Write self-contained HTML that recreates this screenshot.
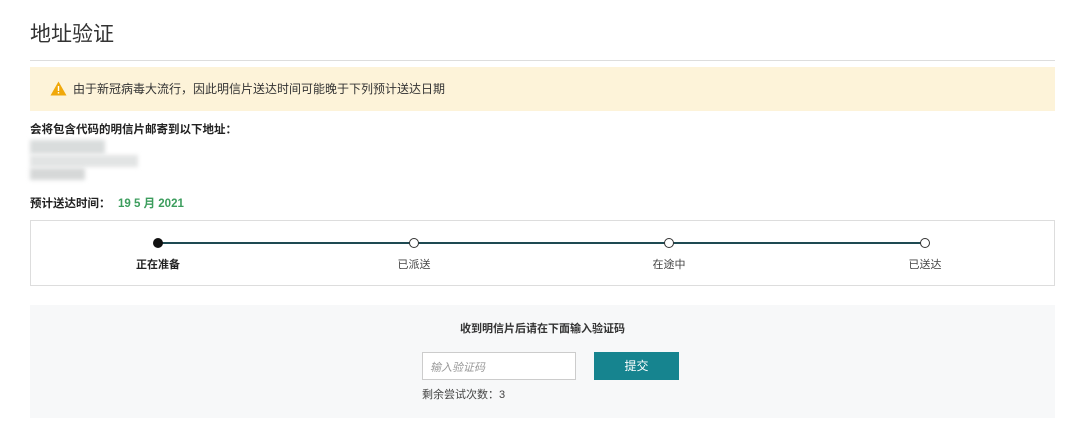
<!DOCTYPE html>
<html><head><meta charset="utf-8"><style>
body{margin:0;background:#fff;font-family:"Liberation Sans","Noto Sans CJK SC",sans-serif;color:#222;width:1080px;height:447px;overflow:hidden;position:relative}
.a{position:absolute}
</style></head><body>
<div class="a" style="left:30px;top:18px;font-size:21px;color:#333;">地址验证</div>
<div class="a" style="left:30px;top:60px;width:1025px;height:1px;background:#ddd"></div>
<div class="a" style="left:30px;top:67px;width:1025px;height:44px;background:#fdf3d9"></div>
<svg class="a" style="left:50px;top:81px" width="17" height="15" viewBox="0 0 17 15"><path d="M8.5 0.5L16.5 14.5H0.5Z" fill="#f0a80a"/><rect x="7.8" y="5" width="1.4" height="5" fill="#fff"/><rect x="7.8" y="11" width="1.4" height="1.5" fill="#fff"/></svg>
<div class="a" style="left:73px;top:80px;font-size:12px;color:#333">由于新冠病毒大流行，因此明信片送达时间可能晚于下列预计送达日期</div>
<div class="a" style="left:30px;top:121px;font-size:11.5px;font-weight:bold;color:#222">会将包含代码的明信片邮寄到以下地址：</div>
<div class="a" style="left:30px;top:140px;width:75px;height:14px;background:#d9dcdc;filter:blur(2px)"></div>
<div class="a" style="left:30px;top:155px;width:108px;height:12px;background:#e2e4e4;filter:blur(2px)"></div>
<div class="a" style="left:30px;top:168px;width:55px;height:12px;background:#d6d8d8;filter:blur(2px)"></div>
<div class="a" style="left:30px;top:195px;font-size:11.5px;font-weight:bold;color:#222">预计送达时间：</div>
<div class="a" style="left:118px;top:195px;font-size:11.5px;font-weight:bold;color:#3c9d5d">19 5 月 2021</div>
<div class="a" style="left:30px;top:220px;width:1023px;height:64px;border:1px solid #ddd"></div>
<div class="a" style="left:158px;top:242px;width:767px;height:2px;background:#1e4a52"></div>
<div class="a" style="left:153px;top:238px;width:10px;height:10px;border-radius:50%;background:#111"></div>
<div class="a" style="left:409px;top:238px;width:8px;height:8px;border-radius:50%;background:#fff;border:1px solid #333"></div>
<div class="a" style="left:664px;top:238px;width:8px;height:8px;border-radius:50%;background:#fff;border:1px solid #333"></div>
<div class="a" style="left:920px;top:238px;width:8px;height:8px;border-radius:50%;background:#fff;border:1px solid #333"></div>
<div class="a" style="left:118px;top:256px;width:80px;text-align:center;font-size:11px;font-weight:bold">正在准备</div>
<div class="a" style="left:374px;top:256px;width:80px;text-align:center;font-size:11px;color:#444">已派送</div>
<div class="a" style="left:629px;top:256px;width:80px;text-align:center;font-size:11px;color:#444">在途中</div>
<div class="a" style="left:885px;top:256px;width:80px;text-align:center;font-size:11px;color:#444">已送达</div>
<div class="a" style="left:30px;top:305px;width:1025px;height:113px;background:#f7f8f9"></div>
<div class="a" style="left:30px;top:320px;width:1025px;text-align:center;font-size:11px;font-weight:bold;color:#333">收到明信片后请在下面输入验证码</div>
<div class="a" style="left:422px;top:352px;width:152px;height:26px;background:#fff;border:1px solid #ccc"></div>
<div class="a" style="left:430px;top:359px;font-size:11px;color:#999;font-style:italic">输入验证码</div>
<div class="a" style="left:594px;top:352px;width:85px;height:28px;background:#16848f;color:#fff;font-size:12px;text-align:center;line-height:28px">提交</div>
<div class="a" style="left:422px;top:386px;font-size:11px;color:#444">剩余尝试次数：3</div>
</body></html>
